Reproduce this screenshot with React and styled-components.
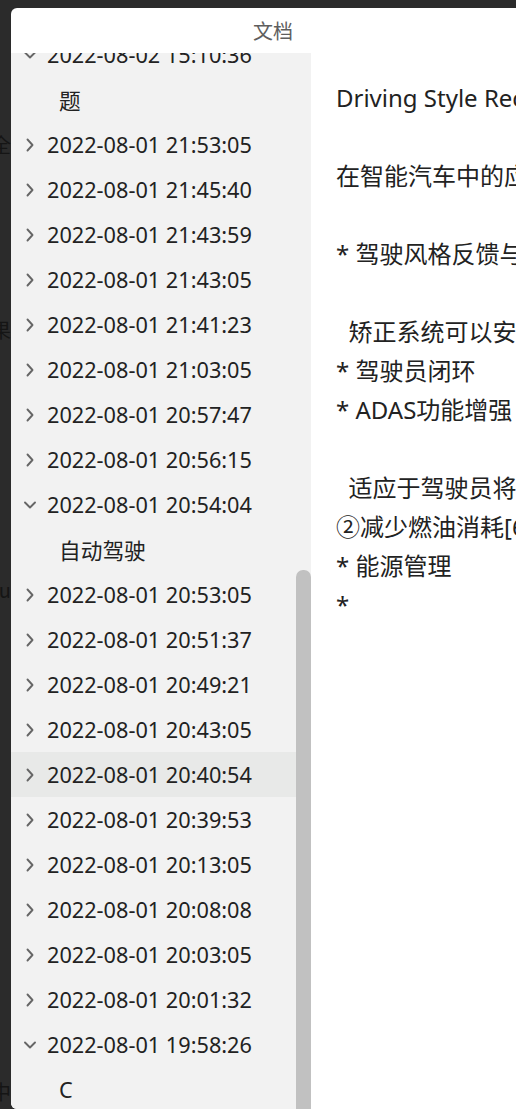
import React, { useLayoutEffect, useRef } from "react";
import styled, { createGlobalStyle } from "styled-components";

const GlobalStyle = createGlobalStyle`
  html, body {
    margin: 0;
    padding: 0;
    background: #2b2b2b;
    overflow: hidden;
  }
  body {
    font-family: "Noto Sans", "Noto Sans CJK SC", sans-serif;
  }
`;

const Screen = styled.div`
  position: relative;
  width: 516px;
  height: 1109px;
  overflow: hidden;
  background: #2b2b2b;
`;

const BackColumn = styled.div`
  display: flex;
  flex-direction: column;
  width: 11px;
  overflow: hidden;
`;

const BackLine = styled.div`
  display: flex;
  justify-content: flex-end;
  height: 30px;
  line-height: 30px;
  margin-top: ${(p) => p.$gap}px;
  font-family: "Noto Sans CJK SC", sans-serif;
  font-size: 20px;
  color: #151515;
  white-space: nowrap;
`;

const Dialog = styled.div`
  position: absolute;
  left: 11px;
  top: 8px;
  width: 524px;
  height: 1101px;
  display: flex;
  flex-direction: column;
  background: #ffffff;
  border-radius: 6px;
  overflow: hidden;
`;

const Header = styled.div`
  height: 45px;
  flex: none;
  display: flex;
  align-items: center;
  justify-content: center;
  font-family: "Noto Sans CJK SC", sans-serif;
  font-size: 20px;
  color: #5e5e5e;
`;

const Body = styled.div`
  flex: 1;
  min-height: 0;
  display: flex;
`;

const Sidebar = styled.div`
  width: 300px;
  flex: none;
  display: flex;
  background: #f2f2f2;
`;

const TreeList = styled.div`
  flex: 1;
  overflow: hidden;
`;

const Row = styled.div`
  height: 45px;
  display: flex;
  align-items: center;
  gap: 11px;
  padding-left: ${(p) => (p.$child ? 48 : 13)}px;
  background: ${(p) => (p.$hover ? "#e8e9e8" : "transparent")};
  font-size: 21.7px;
  color: #222222;
  white-space: nowrap;
`;

const Chevron = styled.svg`
  width: 12px;
  height: 14px;
  flex: none;
  fill: none;
  stroke: #666666;
  stroke-width: 1.9;
  stroke-linecap: round;
  stroke-linejoin: round;
`;

const ScrollTrack = styled.div`
  width: 15px;
  flex: none;
  display: flex;
  flex-direction: column;
  background: #f2f2f2;
`;

const Thumb = styled.div`
  flex: 1;
  background: #c1c1c1;
  border-radius: 7px 7px 0 0;
`;

const Content = styled.div`
  flex: 1;
  min-width: 0;
  overflow: hidden;
  padding: 25px 0 0 25px;
  background: #ffffff;
  font-size: 24px;
  line-height: 39px;
  color: #222222;
  white-space: pre;
`;

const ContentLine = styled.div`
  height: 39px;
`;

const tree = [
  { label: "2022-08-02 15:10:36", open: true },
  { label: "题", child: true },
  { label: "2022-08-01 21:53:05" },
  { label: "2022-08-01 21:45:40" },
  { label: "2022-08-01 21:43:59" },
  { label: "2022-08-01 21:43:05" },
  { label: "2022-08-01 21:41:23" },
  { label: "2022-08-01 21:03:05" },
  { label: "2022-08-01 20:57:47" },
  { label: "2022-08-01 20:56:15" },
  { label: "2022-08-01 20:54:04", open: true },
  { label: "自动驾驶", child: true },
  { label: "2022-08-01 20:53:05" },
  { label: "2022-08-01 20:51:37" },
  { label: "2022-08-01 20:49:21" },
  { label: "2022-08-01 20:43:05" },
  { label: "2022-08-01 20:40:54", hover: true },
  { label: "2022-08-01 20:39:53" },
  { label: "2022-08-01 20:13:05" },
  { label: "2022-08-01 20:08:08" },
  { label: "2022-08-01 20:03:05" },
  { label: "2022-08-01 20:01:32" },
  { label: "2022-08-01 19:58:26", open: true },
  { label: "C", child: true },
  { label: "2022-08-01 19:40:12" },
];

const lines = [
  "Driving Style Recognition",
  "",
  "在智能汽车中的应用",
  "",
  "* 驾驶风格反馈与矫正",
  "",
  "  矫正系统可以安全地",
  "* 驾驶员闭环",
  "* ADAS功能增强",
  "",
  "  适应于驾驶员将",
  "②减少燃油消耗[6]",
  "* 能源管理",
  "*",
];

const backLines = [
  { gap: 130, text: "安全" },
  { gap: 155, text: "效果" },
  { gap: 230, text: "Cross su" },
  { gap: 472, text: "时中" },
];

function ChevronIcon({ open }) {
  return (
    <Chevron viewBox="0 0 12 14">
      {open ? (
        <path d="M1 4.5 L6 9.5 L11 4.5" />
      ) : (
        <path d="M3.5 1.5 L8.5 7 L3.5 12.5" />
      )}
    </Chevron>
  );
}

export default function App() {
  const listRef = useRef(null);
  const scrollOffset = 21;
  const thumbTop = 517;

  useLayoutEffect(() => {
    if (listRef.current) listRef.current.scrollTop = scrollOffset;
  }, []);

  return (
    <Screen>
      <GlobalStyle />
      <BackColumn>
        {backLines.map((l, i) => (
          <BackLine key={i} $gap={l.gap}>
            {l.text}
          </BackLine>
        ))}
      </BackColumn>
      <Dialog>
        <Header>文档</Header>
        <Body>
          <Sidebar>
            <TreeList ref={listRef}>
              {tree.map((item, i) => (
                <Row key={i} $child={item.child} $hover={item.hover}>
                  {!item.child && <ChevronIcon open={item.open} />}
                  <span>{item.label}</span>
                </Row>
              ))}
            </TreeList>
            <ScrollTrack>
              <Thumb style={{ marginTop: thumbTop }} />
            </ScrollTrack>
          </Sidebar>
          <Content>
            {lines.map((l, i) => (
              <ContentLine key={i}>{l}</ContentLine>
            ))}
          </Content>
        </Body>
      </Dialog>
    </Screen>
  );
}
